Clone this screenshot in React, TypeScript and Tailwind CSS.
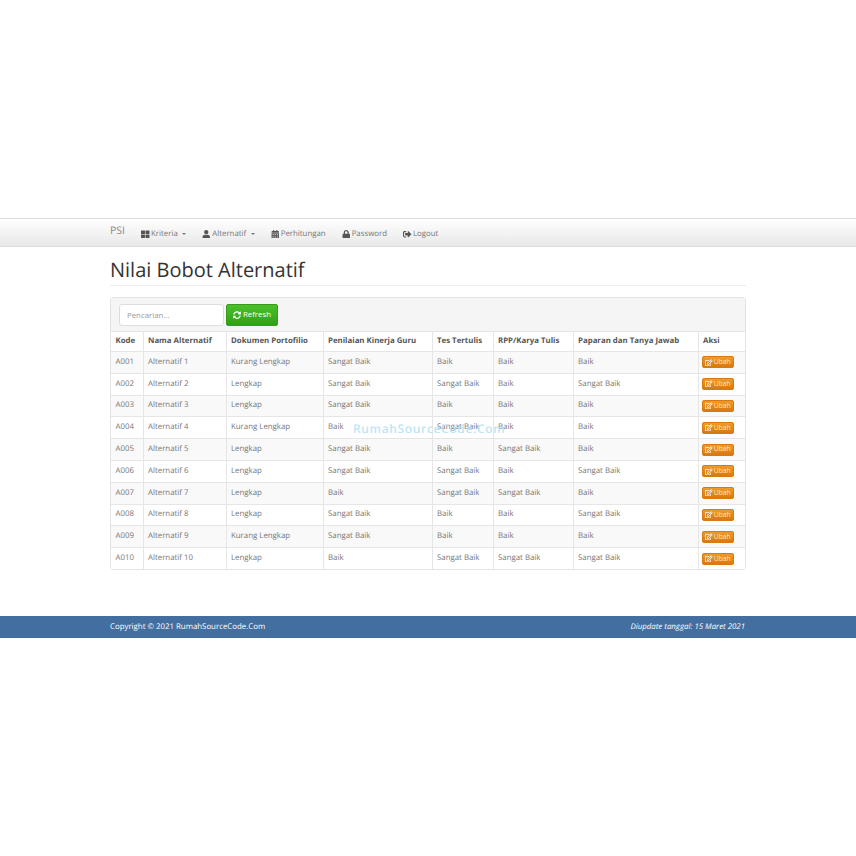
import React from 'react';
import { FaThLarge, FaUser, FaCalendarAlt, FaLock, FaSignOutAlt, FaSyncAlt, FaRegEdit } from 'react-icons/fa';

const rows = [
  ['A001', 'Alternatif 1', 'Kurang Lengkap', 'Sangat Baik', 'Baik', 'Baik', 'Baik'],
  ['A002', 'Alternatif 2', 'Lengkap', 'Sangat Baik', 'Sangat Baik', 'Baik', 'Sangat Baik'],
  ['A003', 'Alternatif 3', 'Lengkap', 'Sangat Baik', 'Baik', 'Baik', 'Baik'],
  ['A004', 'Alternatif 4', 'Kurang Lengkap', 'Baik', 'Sangat Baik', 'Baik', 'Baik'],
  ['A005', 'Alternatif 5', 'Lengkap', 'Sangat Baik', 'Baik', 'Sangat Baik', 'Baik'],
  ['A006', 'Alternatif 6', 'Lengkap', 'Sangat Baik', 'Sangat Baik', 'Baik', 'Sangat Baik'],
  ['A007', 'Alternatif 7', 'Lengkap', 'Baik', 'Sangat Baik', 'Sangat Baik', 'Baik'],
  ['A008', 'Alternatif 8', 'Lengkap', 'Sangat Baik', 'Baik', 'Baik', 'Sangat Baik'],
  ['A009', 'Alternatif 9', 'Kurang Lengkap', 'Sangat Baik', 'Baik', 'Baik', 'Baik'],
  ['A010', 'Alternatif 10', 'Lengkap', 'Baik', 'Sangat Baik', 'Sangat Baik', 'Sangat Baik'],
];

const headers = ['Kode', 'Nama Alternatif', 'Dokumen Portofilio', 'Penilaian Kinerja Guru', 'Tes Tertulis', 'RPP/Karya Tulis', 'Paparan dan Tanya Jawab', 'Aksi'];
const widths = [32, 83, 97, 109, 61, 80, 125, 47];

const nav = [
  { label: 'Kriteria', icon: FaThLarge, caret: true },
  { label: 'Alternatif', icon: FaUser, caret: true },
  { label: 'Perhitungan', icon: FaCalendarAlt, caret: false },
  { label: 'Password', icon: FaLock, caret: false },
  { label: 'Logout', icon: FaSignOutAlt, caret: false },
];

export default function App() {
  return (
    <div className="min-h-[856px] bg-white pt-[218px] text-[7.85px] text-[#777] antialiased font-['Open_Sans',sans-serif] [text-rendering:geometricPrecision]">
      <nav className="h-[29px] border-y border-[#dcdcdc] bg-gradient-to-b from-white to-[#e8e8e8]">
        <div className="mx-auto flex h-full w-[636px] items-center pt-[4px]">
          <span className="mr-[16px] -mt-[5px] text-[10.5px] text-[#8a8a8a]">PSI</span>
          {nav.map((item) => {
            const Icon = item.icon;
            return (
              <span key={item.label} className="mr-[16px] flex items-center gap-[1.5px] text-[7.85px] text-[#777]">
                <Icon className="-mt-[1px] text-[8.5px] text-[#555]" />
                {item.label}
                {item.caret && <span className="ml-[3px] h-0 w-0 border-x-[2.5px] border-t-[2.5px] border-x-transparent border-t-[#777]" />}
              </span>
            );
          })}
        </div>
      </nav>

      <main className="mx-auto w-[636px]">
        <h1 className="mt-[9px] border-b border-[#eee] pb-[1px] text-[20px] leading-[28px] text-[#333]">Nilai Bobot Alternatif</h1>

        <section className="relative mt-[11px] rounded-[3px] border border-[#e3e3e3]">
          <div className="flex h-[33px] items-center gap-[2px] bg-[#f5f5f5] pl-[8px]">
            <input
              placeholder="Pencarian..."
              readOnly
              className="h-[22px] w-[105px] rounded-[3px] border border-[#ddd] bg-white px-[7px] text-[7.85px] placeholder:text-[#999]"
            />
            <button className="flex h-[22px] w-[52px] items-center justify-center gap-[2px] rounded-[2px] border border-[#3a9a1c] bg-gradient-to-b from-[#4cc02a] to-[#2ea01a] text-[7.85px] text-white">
              <FaSyncAlt className="text-[8px]" />
              Refresh
            </button>
          </div>

          <table className="w-full table-fixed border-collapse">
            <colgroup>
              {widths.map((w, i) => (
                <col key={i} style={{ width: w }} />
              ))}
            </colgroup>
            <thead>
              <tr className="h-[20px] border-t border-[#e3e3e3] bg-white">
                {headers.map((h, i) => (
                  <th key={h} className={`pt-[1px] pl-[4.5px] text-left text-[7.85px] font-bold text-[#555] ${i ? 'border-l border-[#e6e6e6]' : ''}`}>
                    {h}
                  </th>
                ))}
              </tr>
            </thead>
            <tbody>
              {rows.map((row, r) => (
                <tr key={row[0]} className={`h-[21.8px] border-t border-[#e6e6e6] ${r % 2 === 0 ? 'bg-[#f9f9f9]' : 'bg-white'}`}>
                  {row.map((cell, i) => (
                    <td key={i} className={`pt-[0.6px] pl-[4.5px] text-[7.85px] text-[#777] ${i ? 'border-l border-[#e6e6e6]' : ''}`}>
                      {cell}
                    </td>
                  ))}
                  <td className="border-l border-[#e6e6e6] pl-[3.5px]">
                    <button className="flex h-[12px] w-[32px] items-center justify-center gap-[1px] rounded-[2px] border border-[#d67a14] bg-gradient-to-b from-[#f09a2a] to-[#d9780f] text-[6.8px] text-[#fde3c0]">
                      <FaRegEdit className="text-[7.5px] text-white" />
                      Ubah
                    </button>
                  </td>
                </tr>
              ))}
            </tbody>
          </table>

          <span className="absolute left-[242px] top-[122px] text-[12px] font-semibold tracking-[0.65px] text-[#b7e3f5] opacity-90">RumahSourceCode.Com</span>
        </section>
      </main>

      <footer className="mt-[46px] h-[22px] bg-[#436ea0] text-[7.85px] text-white">
        <div className="mx-auto flex h-full w-[636px] items-center justify-between pr-[1px]">
          <span>Copyright © 2021 RumahSourceCode.Com</span>
          <em>Diupdate tanggal: 15 Maret 2021</em>
        </div>
      </footer>
    </div>
  );
}
